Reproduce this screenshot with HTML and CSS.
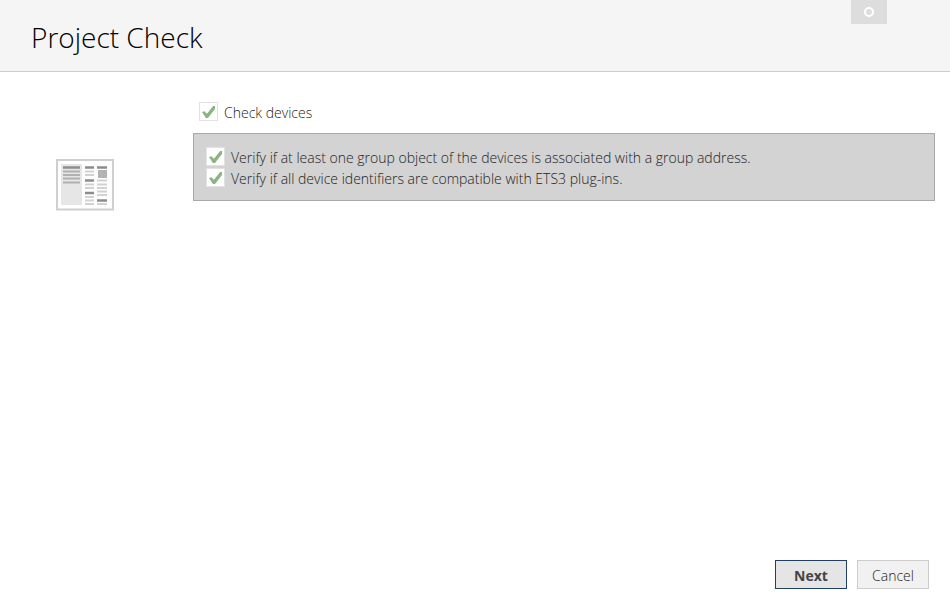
FILE: index.html
```
<!DOCTYPE html>
<html lang="en">
<head>
  <meta charset="UTF-8">
  <meta name="viewport" content="width=device-width, initial-scale=1.0">
  <title>Project Check</title>
  <link rel="stylesheet" href="styles.css">
</head>
<body>
  <header class="header">
    <h1>Project Check</h1>
    <button type="button" class="window-btn" aria-label="Maximize">
      <svg width="12" height="12" viewBox="0 0 12 12"><circle cx="6" cy="6" r="4" fill="none" stroke="#fff" stroke-width="2"/></svg>
    </button>
  </header>

  <form class="wizard">
    <main class="content">
      <div class="picture">
        <svg width="58" height="52" viewBox="0 0 58 52">
          <rect x="1" y="1" width="56" height="49.500" fill="#fff" stroke="#cfcfcf" stroke-width="2"/>
          <rect x="5" y="5" width="21" height="41" fill="#e6e6e6"/>
          <path d="M7 8.500h17" stroke="#8c8c8c" stroke-width="2.500"/>
          <path d="M7 12.500h17M7 16h17M7 19.500h17M7 23.500h17" stroke="#b0b0b0" stroke-width="2"/>
          <path d="M29 8.500h9M29 21.500h9M29 34h9M41 8.500h10M41 41.500h10" stroke="#8c8c8c" stroke-width="2.300"/>
          <path d="M29 12.500h9M29 16h9M29 25.500h9M29 29h9M29 38h9M29 41.500h9M29 45h9M41 21.500h10M41 25.500h10M41 29h10M41 32.500h10M41 36h10M41 45h10" stroke="#d2d2d2" stroke-width="2"/>
          <rect x="42" y="11" width="9" height="8" fill="#b3b3b3"/>
        </svg>
      </div>
      <div class="checks">
        <label class="check check-main"><input type="checkbox" checked>Check devices</label>
        <div class="panel">
          <label class="check"><input type="checkbox" checked>Verify if at least one group object of the devices is associated with a group address.</label>
          <label class="check"><input type="checkbox" checked>Verify if all device identifiers are compatible with ETS3 plug-ins.</label>
        </div>
      </div>
    </main>

    <footer class="actions">
      <button type="button" class="btn btn-next">Next</button>
      <button type="button" class="btn">Cancel</button>
    </footer>
  </form>
</body>
</html>
```
FILE: styles.css
```
* {
  box-sizing: border-box;
}

body {
  margin: 0;
  min-height: 100vh;
  display: flex;
  flex-direction: column;
  background: #fff;
  color: #222;
  font-family: "Segoe UI", "Open Sans", "Noto Sans", sans-serif;
  font-size: 14px;
  font-weight: 300;
}

.header {
  display: flex;
  justify-content: space-between;
  align-items: flex-start;
  padding: 0 63px 0 31px;
  background: #f5f5f5;
  border-bottom: 1px solid #ccc;
}

.header h1 {
  margin: 0;
  padding: 17px 0 14px;
  font-size: 28px;
  line-height: 40px;
  font-weight: 300;
  color: #000;
}

.window-btn {
  display: flex;
  justify-content: center;
  align-items: center;
  width: 36px;
  height: 24px;
  padding: 0;
  border: 0;
  background: #ddd;
}

.wizard {
  flex: 1;
  display: flex;
  flex-direction: column;
}

.content {
  flex: 1;
  display: flex;
  padding: 30px 15px 0 0;
}

.picture {
  width: 193px;
  padding: 57px 0 0 56px;
}

.picture svg {
  display: block;
}

.checks {
  flex: 1;
}

.check {
  display: flex;
  align-items: center;
  gap: 6px;
  line-height: 21px;
}

.check-main {
  padding-left: 6px;
  margin-bottom: 10px;
}

.panel {
  padding: 13px 12px 11px;
  background: #d3d3d3;
  border: 1px solid #a9a9a9;
}

.check input {
  appearance: none;
  flex: none;
  width: 19px;
  height: 19px;
  margin: 0 0 2px;
  padding: 3px 2px;
  background: #fff;
  border: 1px solid #e2e2e2;
}

.check input:checked::before {
  content: "";
  display: block;
  width: 13px;
  height: 12px;
  background: #8ab583;
  clip-path: polygon(0 50%, 18% 44%, 38% 64%, 86% 0, 100% 0, 100% 26%, 46% 100%, 30% 100%);
}

.actions {
  display: flex;
  justify-content: flex-end;
  gap: 10px;
  padding: 0 21px 9px;
}

.btn {
  width: 72px;
  height: 29px;
  padding: 2px 0 0;
  background: #f1f1f1;
  border: 1px solid #ccc;
  color: #222;
  font: inherit;
}

.btn-next {
  background: #e5e5e5;
  border-color: #1e3f66;
  color: #444;
  font-weight: 700;
}
```
